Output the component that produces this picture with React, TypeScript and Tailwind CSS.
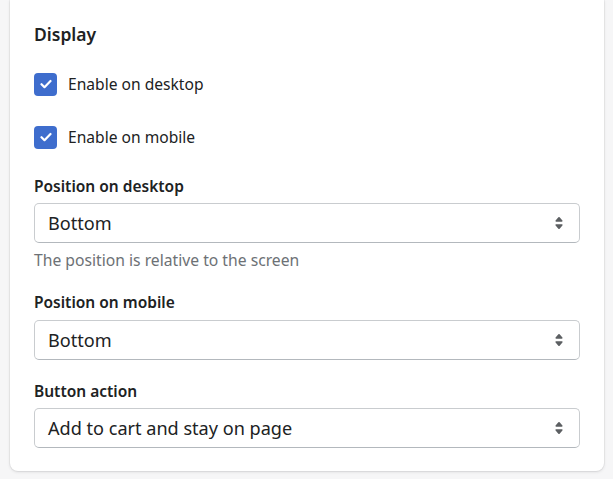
import React from "react";

const font = { fontFamily: '"Noto Sans", "Open Sans", sans-serif' };

function Check({ label }: { label: string }) {
  return (
    <div className="flex items-center h-[24px] gap-[11px]">
      <div className="w-[23px] h-[23px] rounded-[4px] bg-[#3e6dcd] flex items-center justify-center">
        <svg width="12" height="10" viewBox="0 0 12 10" fill="none">
          <path d="M1.5 5.2l3 3L10.5 2" stroke="white" strokeWidth="2.2" strokeLinecap="round" strokeLinejoin="round" />
        </svg>
      </div>
      <span className="text-[15.6px] text-[#202223] leading-[24px]">{label}</span>
    </div>
  );
}

function Arrows() {
  return (
    <svg width="24" height="24" viewBox="0 0 20 20" fill="#5c5f62">
      <path d="M7.676 9h4.648c.563 0 .879-.603.53-1.014l-2.323-2.746a.708.708 0 0 0-1.062 0l-2.324 2.746c-.347.411-.032 1.014.531 1.014zm4.648 2h-4.648c-.563 0-.878.603-.53 1.014l2.323 2.746c.27.32.792.32 1.062 0l2.323-2.746c.349-.411.033-1.014-.53-1.014z" />
    </svg>
  );
}

function Select({ value }: { value: string }) {
  return (
    <div className="h-[40px] rounded-[5px] border border-[#c9cccf] border-b-[#b3b8bd] bg-white flex items-center justify-between pl-[13px] pr-[8px]">
      <span className="text-[18.1px] text-[#202223] leading-[24px]">{value}</span>
      <Arrows />
    </div>
  );
}

export default function App() {
  return (
    <div className="w-[613px] min-h-[479px] bg-[#f6f6f7] pl-[10px] pr-[9px]" style={font}>
      <div className="bg-white rounded-b-[8px] shadow-[0_0_0_1px_rgba(63,63,68,0.05),0_1px_3px_0_rgba(63,63,68,0.15)] px-[24px] pt-[22px] pb-[23px] flex flex-col">
        <h2 className="text-[17.5px] font-semibold text-[#202223] leading-[24px]">Display</h2>
        <div className="mt-[26px]">
          <Check label="Enable on desktop" />
        </div>
        <div className="mt-[29px]">
          <Check label="Enable on mobile" />
        </div>
        <div className="mt-[27px] text-[15.5px] font-semibold text-[#202223] leading-[20px]">Position on desktop</div>
        <div className="mt-[7px]">
          <Select value="Bottom" />
        </div>
        <div className="mt-[7px] text-[15.7px] text-[#6d7175] leading-[20px]">The position is relative to the screen</div>
        <div className="mt-[22px] text-[15.5px] font-semibold text-[#202223] leading-[20px]">Position on mobile</div>
        <div className="mt-[8px]">
          <Select value="Bottom" />
        </div>
        <div className="mt-[21px] text-[15.5px] font-semibold text-[#202223] leading-[20px]">Button action</div>
        <div className="mt-[7px]">
          <Select value="Add to cart and stay on page" />
        </div>
      </div>
    </div>
  );
}
